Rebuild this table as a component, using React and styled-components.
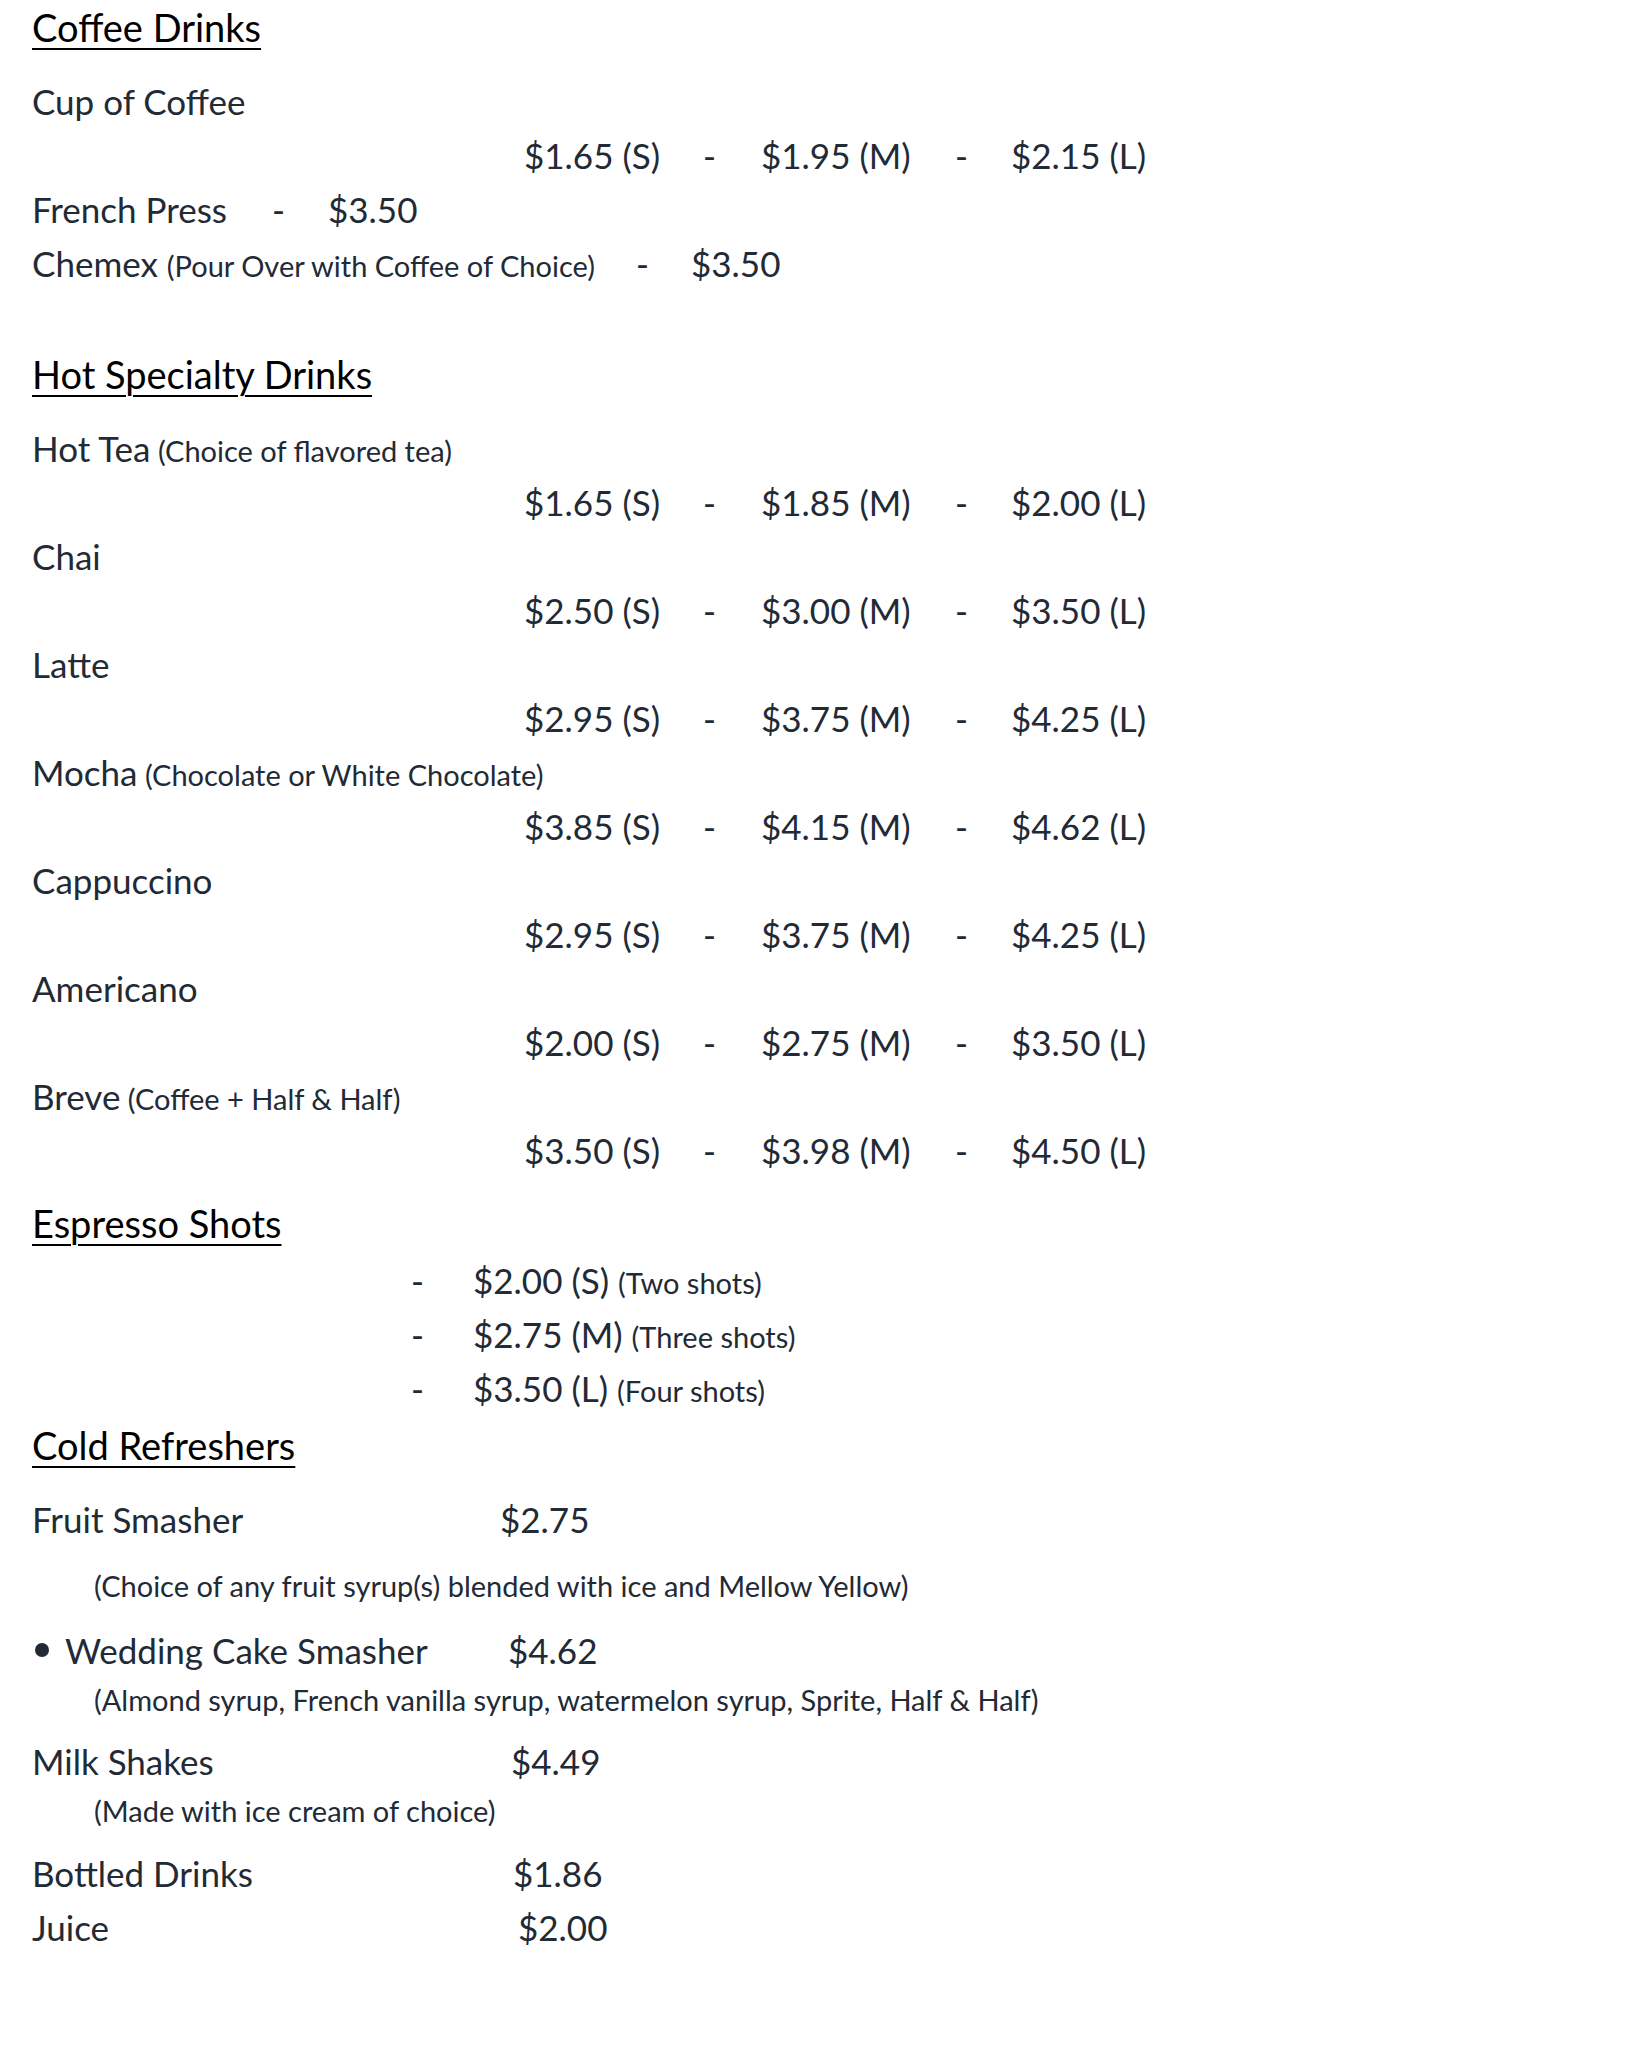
import styled, { createGlobalStyle } from "styled-components";

const GlobalStyle = createGlobalStyle`
  html, body {
    margin: 0;
    padding: 0;
    background: #ffffff;
  }
  body {
    font-family: Lato, "Open Sans", "Liberation Sans", sans-serif;
  }
`;

const Page = styled.main`
  box-sizing: border-box;
  width: 1643px;
  min-height: 2048px;
  padding: 0 32px 60px;
  color: #222a35;
  font-size: 35px;
`;

const Heading = styled.h2`
  margin: ${p => p.$top || 0}px 0 ${p => p.$bottom ?? 20}px;
  height: 54px;
  line-height: 54px;
  font-size: 38px;
  font-weight: 400;
  color: #000;
  text-decoration: underline;
  text-decoration-thickness: 2px;
  text-underline-offset: 6px;
`;

const Line = styled.div`
  display: flex;
  align-items: baseline;
  height: ${p => p.$h || 54}px;
  line-height: ${p => p.$h || 54}px;
  margin-top: ${p => p.$top || 0}px;
  padding-left: ${p => p.$indent || 0}px;
  white-space: nowrap;
`;

const Seg = styled.span`
  flex: none;
  width: ${p => (p.$w ? `${p.$w}px` : "auto")};
`;

const Small = styled.span`
  font-size: 29px;
`;

const Note = styled(Line)`
  font-size: 29px;
`;

const Bullet = styled.span`
  flex: none;
  align-self: center;
  width: 14px;
  height: 14px;
  margin: 0 16px 0 3px;
  border-radius: 50%;
  background: #222a35;
`;

const hotDrinks = [
  { name: "Hot Tea", note: "(Choice of flavored tea)", prices: ["$1.65", "$1.85", "$2.00"] },
  { name: "Chai", prices: ["$2.50", "$3.00", "$3.50"] },
  { name: "Latte", prices: ["$2.95", "$3.75", "$4.25"] },
  { name: "Mocha", note: "(Chocolate or White Chocolate)", prices: ["$3.85", "$4.15", "$4.62"] },
  { name: "Cappuccino", prices: ["$2.95", "$3.75", "$4.25"] },
  { name: "Americano", prices: ["$2.00", "$2.75", "$3.50"] },
  { name: "Breve", note: "(Coffee + Half & Half)", prices: ["$3.50", "$3.98", "$4.50"] },
];

const shots = [
  { price: "$2.00 (S)", note: "(Two shots)" },
  { price: "$2.75 (M)", note: "(Three shots)" },
  { price: "$3.50 (L)", note: "(Four shots)" },
];

function SizePrices({ prices }) {
  return (
    <Line>
      <Seg $w={492} />
      <Seg $w={179}>{prices[0]} (S)</Seg>
      <Seg $w={58}>-</Seg>
      <Seg $w={194}>{prices[1]} (M)</Seg>
      <Seg $w={56}>-</Seg>
      <Seg>{prices[2]} (L)</Seg>
    </Line>
  );
}

function ItemName({ name, note }) {
  return (
    <Line>
      <Seg>
        {name}
        {note && <Small> {note}</Small>}
      </Seg>
    </Line>
  );
}

export default function App() {
  return (
    <>
      <GlobalStyle />
      <Page>
        <Heading>Coffee Drinks</Heading>
        <ItemName name="Cup of Coffee" />
        <SizePrices prices={["$1.65", "$1.95", "$2.15"]} />
        <Line>
          <Seg $w={240}>French Press</Seg>
          <Seg $w={56}>-</Seg>
          <Seg>$3.50</Seg>
        </Line>
        <Line>
          <Seg $w={604}>
            Chemex <Small>(Pour Over with Coffee of Choice)</Small>
          </Seg>
          <Seg $w={55}>-</Seg>
          <Seg>$3.50</Seg>
        </Line>

        <Heading $top={57}>Hot Specialty Drinks</Heading>
        {hotDrinks.map(d => (
          <div key={d.name}>
            <ItemName name={d.name} note={d.note} />
            <SizePrices prices={d.prices} />
          </div>
        ))}

        <Heading $top={19} $bottom={3}>Espresso Shots</Heading>
        {shots.map(s => (
          <Line key={s.price}>
            <Seg $w={379} />
            <Seg $w={62}>-</Seg>
            <Seg>
              {s.price} <Small>{s.note}</Small>
            </Seg>
          </Line>
        ))}

        <Heading $top={3}>Cold Refreshers</Heading>
        <Line>
          <Seg $w={468}>Fruit Smasher</Seg>
          <Seg>$2.75</Seg>
        </Line>
        <Note $h={44} $top={18} $indent={62}>
          (Choice of any fruit syrup(s) blended with ice and Mellow Yellow)
        </Note>
        <Line $top={15}>
          <Bullet />
          <Seg $w={443}>Wedding Cake Smasher</Seg>
          <Seg>$4.62</Seg>
        </Line>
        <Note $h={44} $top={1} $indent={62}>
          (Almond syrup, French vanilla syrup, watermelon syrup, Sprite, Half &amp; Half)
        </Note>
        <Line $top={12}>
          <Seg $w={479}>Milk Shakes</Seg>
          <Seg>$4.49</Seg>
        </Line>
        <Note $h={44} $top={1} $indent={62}>
          (Made with ice cream of choice)
        </Note>
        <Line $top={13}>
          <Seg $w={481}>Bottled Drinks</Seg>
          <Seg>$1.86</Seg>
        </Line>
        <Line>
          <Seg $w={486}>Juice</Seg>
          <Seg>$2.00</Seg>
        </Line>
      </Page>
    </>
  );
}
